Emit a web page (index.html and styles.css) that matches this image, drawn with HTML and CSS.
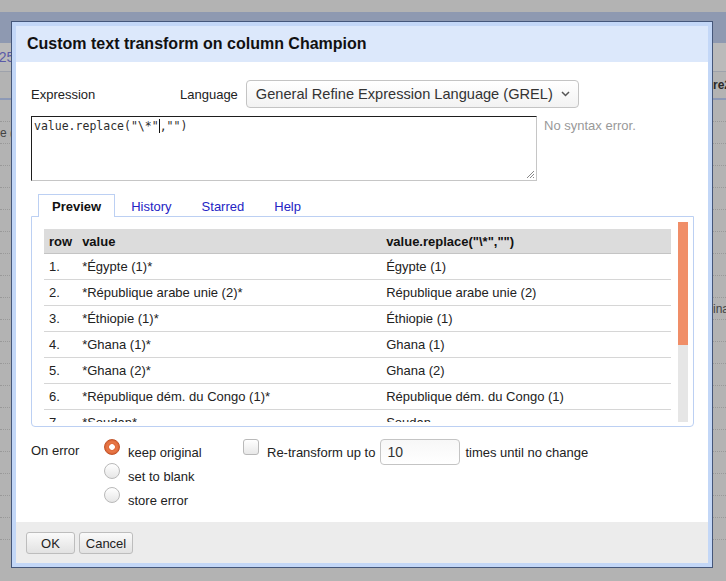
FILE: index.html
```html
<!DOCTYPE html>
<html>
<head>
<meta charset="utf-8">
<link rel="stylesheet" href="styles.css">
</head>
<body>
<div class="page">
  <div class="page-top"></div>
  <div class="page-bar"></div>
  <div class="page-sub"><span class="sub-left">125</span></div>
  <div class="page-head"><span></span><span class="head-right">re2</span></div>
  <div class="page-rows">
    <div class="prow"></div>
    <div class="prow"><span class="pl">e (</span></div>
    <div class="prow"></div>
    <div class="prow"></div>
    <div class="prow"></div>
    <div class="prow"></div>
    <div class="prow"></div>
    <div class="prow"></div>
    <div class="prow"></div>
    <div class="prow"><span></span><span class="pr">ina</span></div>
    <div class="prow"></div>
    <div class="prow"></div>
    <div class="prow"></div>
    <div class="prow"></div>
    <div class="prow"></div>
    <div class="prow"></div>
    <div class="prow"></div>
    <div class="prow"></div>
    <div class="prow"></div>
    <div class="prow"></div>
  </div>
</div>

<div class="dialog">
  <div class="dlg-header">Custom text transform on column Champion</div>
  <div class="dlg-body">
    <div class="expr-row">
      <span class="expr-lbl">Expression</span>
      <span class="lang-lbl">Language</span>
      <div class="select">
        <span>General Refine Expression Language (GREL)</span>
        <svg class="chev" width="9" height="6" viewBox="0 0 9 6"><path d="M1 1 L4.5 4.5 L8 1" fill="none" stroke="#555" stroke-width="1.5"/></svg>
      </div>
    </div>
    <div class="code-row">
      <div class="code">value.replace("\*"<span class="caret"></span>,"")<svg class="grip" width="9" height="9" viewBox="0 0 9 9"><path d="M8 1 L1 8 M8 4 L4 8 M8 7 L7 8" stroke="#888" stroke-width="1"/></svg></div>
      <div class="status">No syntax error.</div>
    </div>
    <div class="tabs">
      <div class="tab active">Preview</div>
      <div class="tab">History</div>
      <div class="tab">Starred</div>
      <div class="tab">Help</div>
    </div>
    <div class="panel">
      <div class="preview">
        <div class="clip">
          <table>
            <thead>
              <tr><th class="c1">row</th><th class="c2">value</th><th class="c3">value.replace("\*","")</th></tr>
            </thead>
            <tbody>
              <tr><td>1.</td><td>*Égypte (1)*</td><td>Égypte (1)</td></tr>
              <tr><td>2.</td><td>*République arabe unie (2)*</td><td>République arabe unie (2)</td></tr>
              <tr><td>3.</td><td>*Éthiopie (1)*</td><td>Éthiopie (1)</td></tr>
              <tr><td>4.</td><td>*Ghana (1)*</td><td>Ghana (1)</td></tr>
              <tr><td>5.</td><td>*Ghana (2)*</td><td>Ghana (2)</td></tr>
              <tr><td>6.</td><td>*République dém. du Congo (1)*</td><td>République dém. du Congo (1)</td></tr>
              <tr><td>7.</td><td>*Soudan*</td><td>Soudan</td></tr>
            </tbody>
          </table>
        </div>
        <div class="scrollbar"><div class="thumb"></div></div>
      </div>
    </div>
    <div class="options">
      <div class="on-error">On error</div>
      <div class="radios">
        <div class="radio-row"><span class="radio checked"></span><span class="rlabel">keep original</span></div>
        <div class="radio-row"><span class="radio"></span><span class="rlabel">set to blank</span></div>
        <div class="radio-row"><span class="radio"></span><span class="rlabel">store error</span></div>
      </div>
      <div class="retransform">
        <span class="checkbox"></span>
        <span class="rlabel">Re-transform up to</span>
        <span class="num">10</span>
        <span class="rlabel times">times until no change</span>
      </div>
    </div>
  </div>
  <div class="dlg-footer">
    <button class="btn ok">OK</button>
    <button class="btn cancel">Cancel</button>
  </div>
</div>
</body>
</html>
```

FILE: styles.css
```css
html, body {
  margin: 0;
  padding: 0;
}
body {
  width: 726px;
  height: 581px;
  overflow: hidden;
  position: relative;
  background: #b3b3b3;
  font-family: "Liberation Sans", Arial, sans-serif;
  font-size: 13px;
  color: #222;
}

/* background page (under overlay) */
.page {
  width: 726px;
}
.page-top {
  height: 12px;
  background: #b3b3b3;
}
.page-bar {
  height: 31px;
  background: #8e99b1;
}
.page-sub {
  height: 29px;
  background: #bababa;
  border-bottom: 1px solid #9ea2ab;
  box-sizing: border-box;
  display: flex;
  align-items: center;
  overflow: hidden;
}
.sub-left {
  margin-left: -9px;
  color: #5a5aa8;
  font-size: 14px;
}
.page-head {
  height: 28px;
  box-sizing: border-box;
  border-bottom: 2px solid #8d99b6;
  background: #b3b3b3;
  display: flex;
  justify-content: space-between;
  align-items: center;
}
.head-right {
  width: 13px;
  overflow: hidden;
  white-space: nowrap;
  font-weight: bold;
  font-size: 12px;
  color: #2a2a2a;
}
.prow {
  height: 22px;
  box-sizing: border-box;
  border-bottom: 1px dotted #999;
  display: flex;
  justify-content: space-between;
  align-items: center;
  font-size: 12px;
  color: #444;
}
.pl {
  width: 11px;
  overflow: hidden;
  white-space: nowrap;
}
.pr {
  width: 13px;
  overflow: hidden;
  white-space: nowrap;
}

/* dialog */
.dialog {
  position: absolute;
  left: 11px;
  top: 21px;
  width: 702px;
  box-sizing: border-box;
  border: 1px solid #45577a;
  padding: 4px;
  background: #c3d7f7;
}
.dlg-header {
  height: 36px;
  background: #dce8fb;
  padding-left: 11px;
  display: flex;
  align-items: center;
  font-size: 16px;
  font-weight: bold;
  color: #111;
}
.dlg-body {
  height: 460px;
  box-sizing: border-box;
  background: #fff;
  padding: 18px 14px 0 15px;
}
.expr-row {
  display: flex;
  align-items: center;
  height: 28px;
}
.expr-lbl {
  width: 149px;
  color: #222;
}
.lang-lbl {
  margin-right: 8px;
  color: #222;
}
.select {
  width: 333px;
  height: 28px;
  box-sizing: border-box;
  border: 1px solid #c4c4c4;
  border-radius: 4px;
  background: linear-gradient(#ffffff, #f2f2f2);
  display: flex;
  align-items: center;
  padding-left: 9px;
  font-size: 14.6px;
  color: #333;
  white-space: nowrap;
}
.chev {
  margin-left: auto;
  margin-right: 8px;
}
.code-row {
  display: flex;
  align-items: flex-start;
  margin-top: 8px;
}
.code {
  position: relative;
  width: 506px;
  height: 65px;
  box-sizing: border-box;
  border-top: 1px solid #1e1e1e;
  border-left: 1px solid #1e1e1e;
  border-right: 1px solid #c6c6c6;
  border-bottom: 1px solid #c6c6c6;
  padding: 1px 2px;
  font-family: "DejaVu Sans Mono", "Liberation Mono", monospace;
  font-size: 11.5px;
  line-height: 17px;
  color: #2c2c2c;
  white-space: pre;
}
.caret {
  display: inline-block;
  width: 0;
  height: 14px;
  border-left: 1px solid #111;
  vertical-align: -3px;
}
.grip {
  position: absolute;
  right: 1px;
  bottom: 1px;
}
.status {
  margin-left: 7px;
  padding-top: 1px;
  color: #999;
  line-height: 17px;
}
.tabs {
  display: flex;
  gap: 2px;
  margin-top: 13px;
  margin-left: 7px;
  height: 22px;
}
.tab {
  height: 23px;
  box-sizing: border-box;
  padding: 0 13px;
  display: flex;
  align-items: center;
  color: #2424c4;
  border: 1px solid transparent;
  border-bottom: none;
}
.tab.active {
  position: relative;
  z-index: 1;
  background: #fff;
  border-color: #bcd0f3;
  color: #111;
  font-weight: bold;
}
.panel {
  height: 211px;
  box-sizing: border-box;
  border: 1px solid #bcd0f3;
  border-radius: 0 0 4px 4px;
  padding: 5px 4px 4px 12px;
}
.preview {
  display: flex;
  height: 200px;
}
.clip {
  width: 627px;
  height: 200px;
  box-sizing: border-box;
  padding-top: 7px;
  overflow: hidden;
}
table {
  width: 627px;
  border-collapse: separate;
  border-spacing: 0;
}
th {
  height: 24px;
  padding: 0 5px;
  text-align: left;
  background: #dcdcdc;
  border-bottom: 1px solid #c4c4c4;
  font-weight: bold;
  color: #111;
}
th.c1 { width: 23px; }
th.c2 { width: 294px; }
td {
  height: 25px;
  padding: 0 5px;
  border-bottom: 1px solid #d6d6d6;
  color: #222;
  white-space: nowrap;
}
.scrollbar {
  margin-left: 7px;
  width: 10px;
  height: 200px;
  background: #e6e6e6;
}
.thumb {
  height: 123px;
  background: #f08e68;
}
.options {
  display: flex;
  align-items: flex-start;
  margin-top: 12px;
}
.on-error {
  width: 73px;
  padding-top: 3px;
  line-height: 17px;
}
.radios {
  width: 139px;
  display: flex;
  flex-direction: column;
  gap: 2px;
}
.radio-row {
  display: flex;
  align-items: flex-start;
  height: 22px;
}
.radio {
  width: 16px;
  height: 16px;
  box-sizing: border-box;
  border-radius: 50%;
  border: 1px solid #b9b9b9;
  background: linear-gradient(#ffffff, #e6e6e6);
  margin-right: 8px;
}
.radio.checked {
  border-color: #c2542a;
  background: radial-gradient(circle at 50% 50%, #ffffff 0 2.5px, #e06a3a 3.2px, #e87848 5px, #d45a2b 8px);
}
.rlabel {
  padding-top: 5px;
  line-height: 17px;
  white-space: nowrap;
}
.retransform {
  display: flex;
  align-items: flex-start;
}
.checkbox {
  width: 16px;
  height: 16px;
  box-sizing: border-box;
  border: 1px solid #b9b9b9;
  border-radius: 3px;
  background: linear-gradient(#ffffff, #e8e8e8);
  margin-right: 8px;
}
.num {
  margin-left: 5px;
  width: 80px;
  height: 26px;
  box-sizing: border-box;
  border: 1px solid #c4c4c4;
  border-radius: 4px;
  background: linear-gradient(#f7f7f7, #ffffff);
  padding-left: 6px;
  display: flex;
  align-items: center;
  font-size: 14px;
  color: #333;
}
.times {
  margin-left: 5px;
}
.dlg-footer {
  height: 41px;
  box-sizing: border-box;
  background: #ececec;
  padding: 10px 0 0 10px;
  display: flex;
  gap: 4px;
  align-items: flex-start;
}
.btn {
  height: 22px;
  box-sizing: border-box;
  border: 1px solid #bdbdbd;
  border-radius: 3px;
  background: linear-gradient(#fafafa, #e2e2e2);
  font-family: "Liberation Sans", Arial, sans-serif;
  font-size: 13px;
  color: #222;
  padding: 0;
  margin: 0;
}
.btn.ok { width: 49px; }
.btn.cancel { width: 54px; }
```
